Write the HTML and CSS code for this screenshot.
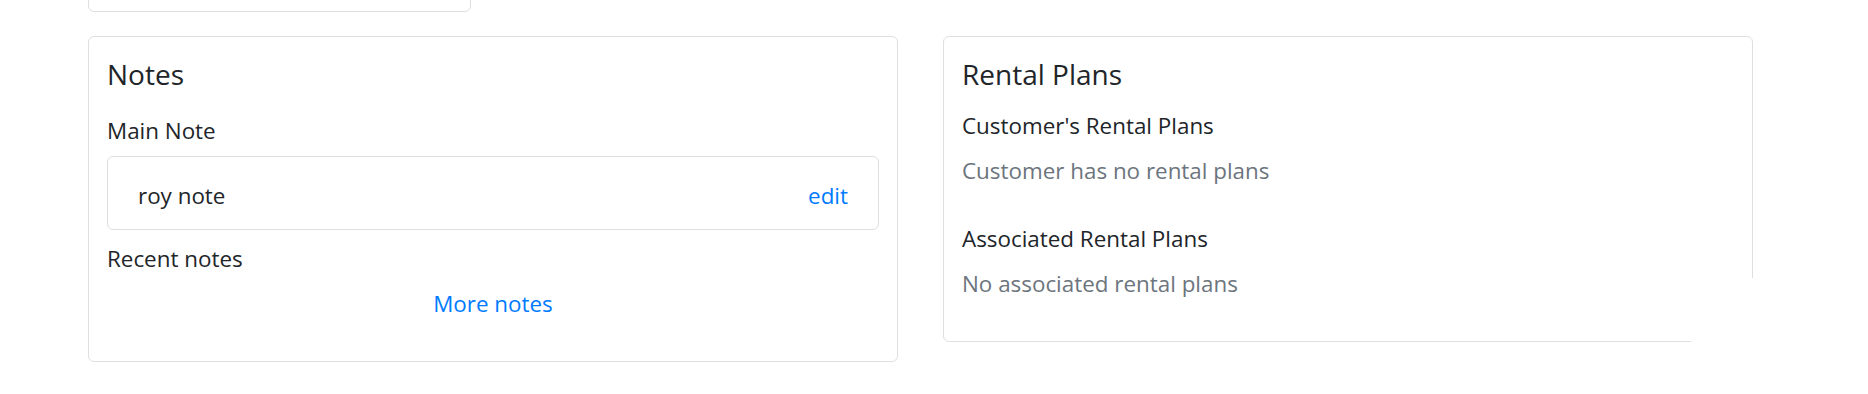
FILE: index.html
```html
<!DOCTYPE html>
<html lang="en">
<head>
    <meta charset="UTF-8">
    <meta name="viewport" content="width=device-width, initial-scale=1.0">
    <title>Customer</title>
    <link rel="stylesheet" href="styles.css">
</head>
<body>
    <div class="page">
        <div class="card card-top"></div>

        <div class="row">
            <div class="card notes">
                <div class="card-body">
                    <h5 class="card-title notes-title">Notes</h5>
                    <h6 class="label main-label">Main Note</h6>
                    <ul class="list-group">
                        <li class="list-group-item">
                            <span>roy note</span>
                            <a href="#" class="link">edit</a>
                        </li>
                    </ul>
                    <h6 class="label recent-label">Recent notes</h6>
                    <div class="more">
                        <a href="#" class="link">More notes</a>
                    </div>
                </div>
            </div>

            <div class="card rentals">
                <div class="card-body">
                    <h5 class="card-title rentals-title">Rental Plans</h5>
                    <h6 class="label section-label">Customer's Rental Plans</h6>
                    <p class="muted first-muted">Customer has no rental plans</p>
                    <h6 class="label section-label">Associated Rental Plans</h6>
                    <p class="muted last-muted">No associated rental plans</p>
                </div>
            </div>
        </div>

        <div class="cover"></div>
    </div>
</body>
</html>
```

FILE: styles.css
```css
body {
    margin: 0;
    background: #fff;
    font-family: "Open Sans", "Noto Sans", sans-serif;
    font-size: 22.4px;
    line-height: 34px;
    color: #212529;
}
.page {
    position: relative;
    display: flow-root;
    padding-left: 88px;
}
.card {
    background: #fff;
    border: 1px solid #dfdfdf;
    border-radius: 6px;
    box-sizing: border-box;
}
.card-top {
    width: 383px;
    height: 40px;
    margin-top: -28px;
    margin-bottom: 24px;
}
.row {
    display: flex;
    align-items: flex-start;
    gap: 45px;
}
.notes,
.rentals {
    width: 810px;
}
.card-body {
    padding: 20px 18px;
}
.card-title {
    margin: 0;
    font-size: 28px;
    line-height: 34px;
    font-weight: 400;
}
.notes-title {
    margin-bottom: 23px;
}
.rentals-title {
    margin-bottom: 18px;
}
.label {
    margin: 0;
    font-size: 22.4px;
    line-height: 34px;
    font-weight: 400;
}
.main-label {
    margin-bottom: 8px;
}
.recent-label {
    margin-top: 12px;
}
.section-label {
    margin-bottom: 11px;
}
.list-group {
    list-style: none;
    margin: 0;
    padding: 0;
}
.list-group-item {
    display: flex;
    justify-content: space-between;
    padding: 22px 30px 16px;
    border: 1px solid #dfdfdf;
    border-radius: 6px;
}
.link {
    color: #007bff;
    text-decoration: none;
}
.more {
    margin: 11px 0 20px;
    text-align: center;
}
.muted {
    margin: 0;
    color: #6c757d;
}
.first-muted {
    margin-bottom: 34px;
}
.last-muted {
    margin-bottom: 20px;
}
.cover {
    position: absolute;
    left: 1691px;
    top: 278px;
    width: 100px;
    height: 100px;
    background: #fff;
}
```
